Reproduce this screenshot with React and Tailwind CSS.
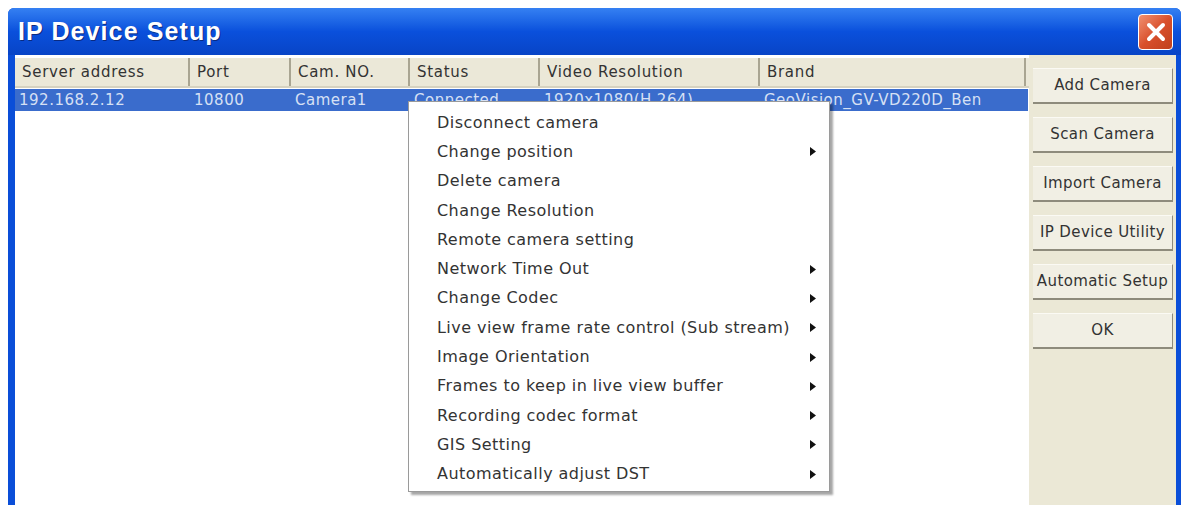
import React from "react";

const cols = [
  { name: "Server address", w: 175, val: "192.168.2.12" },
  { name: "Port", w: 101, val: "10800" },
  { name: "Cam. NO.", w: 119, val: "Camera1" },
  { name: "Status", w: 130, val: "Connected" },
  { name: "Video Resolution", w: 220, val: "1920x1080(H.264)" },
  { name: "Brand", w: 266, val: "GeoVision_GV-VD220D_Ben" },
];

const menu = [
  ["Disconnect camera", false],
  ["Change position", true],
  ["Delete camera", false],
  ["Change Resolution", false],
  ["Remote camera setting", false],
  ["Network Time Out", true],
  ["Change Codec", true],
  ["Live view frame rate control (Sub stream)", true],
  ["Image Orientation", true],
  ["Frames to keep in live view buffer", true],
  ["Recording codec format", true],
  ["GIS Setting", true],
  ["Automatically adjust DST", true],
];

const buttons = ["Add Camera", "Scan Camera", "Import Camera", "IP Device Utility", "Automatic Setup", "OK"];

const dv = { fontFamily: '"DejaVu Sans", Verdana, sans-serif' };

export default function App() {
  return (
    <div
      className="relative w-[1184px] h-[509px] bg-white overflow-hidden"
      style={{ fontFamily: '"Liberation Sans", Arial, sans-serif' }}
    >
      <div className="absolute left-[8px] top-[8px] w-[1173px] h-[497px] flex flex-col rounded-t-[6px] bg-[#0a4ed8] overflow-hidden">
        {/* Title bar */}
        <div className="h-[47px] flex items-center justify-between pl-[10px] pr-[8px] bg-gradient-to-b from-[#3580f2] via-[#0a50dc] to-[#0844c6]">
          <span className="text-white font-bold text-[25px] tracking-[1.1px] [text-shadow:1px_1px_0_#0a2a80]">
            IP Device Setup
          </span>
          <div className="w-[35px] h-[36px] rounded-[4px] border border-white bg-gradient-to-br from-[#f09070] via-[#d9502c] to-[#c0401c] flex items-center justify-center">
            <svg width="22" height="22" viewBox="0 0 22 22">
              <path d="M4 4 L18 18 M18 4 L4 18" stroke="white" strokeWidth="4" strokeLinecap="round" />
            </svg>
          </div>
        </div>
        {/* Body */}
        <div className="flex-1 flex ml-[7px] mr-[5px] mb-0 bg-white">
          <div className="w-[1014px] pt-[3px] bg-white">
            <div className="flex h-[30px] bg-[#ebe8d8] border-b-[2px] border-[#d6d2c0]" style={dv}>
              {cols.map((c) => (
                <div
                  key={c.name}
                  style={{ width: c.w }}
                  className="h-full flex items-center pl-[7px] text-[15px] tracking-[0.7px] text-[#333] border-r-[2px] border-[#a9a592] shrink-0"
                >
                  {c.name}
                </div>
              ))}
            </div>
            <div className="flex h-[22px] mt-[1px] bg-[#3a6ccc] w-[1013px]" style={dv}>
              {cols.map((c) => (
                <div
                  key={c.name}
                  style={{ width: c.w }}
                  className="h-full flex items-center pl-[4px] text-[15px] tracking-[0.5px] text-[#d6e0f4] shrink-0 whitespace-nowrap overflow-hidden"
                >
                  {c.val}
                </div>
              ))}
            </div>
          </div>
          <div className="flex-1 bg-[#ebe8d6] flex flex-col items-center pt-[13px] gap-[13px] pl-[1px]" style={dv}>
            {buttons.map((b) => (
              <div
                key={b}
                className="w-[140px] h-[36px] flex items-center justify-center bg-[#f1efe4] border-b-[2px] border-r-[1px] border-[#8e8b7c] border-t border-t-[#fbfaf4] text-[15px] tracking-[0.4px] text-[#333] whitespace-nowrap"
              >
                {b}
              </div>
            ))}
          </div>
        </div>
      </div>

      {/* Context menu */}
      <div
        className="absolute left-[408px] top-[101px] w-[422px] h-[391px] bg-white border border-[#9a9a9a] shadow-[3px_3px_2px_rgba(0,0,0,0.35)] pt-[6px]"
        style={dv}
      >
        {menu.map(([t, arrow]) => (
          <div key={t} className="h-[29.3px] flex items-center justify-between pl-[28px] pr-[13px] text-[16px] tracking-[0.45px] text-[#333] whitespace-nowrap">
            <span>{t}</span>
            {arrow && (
              <svg width="6" height="9" viewBox="0 0 6 9">
                <path d="M0 0 L6 4.5 L0 9 Z" fill="#111" />
              </svg>
            )}
          </div>
        ))}
      </div>
    </div>
  );
}
